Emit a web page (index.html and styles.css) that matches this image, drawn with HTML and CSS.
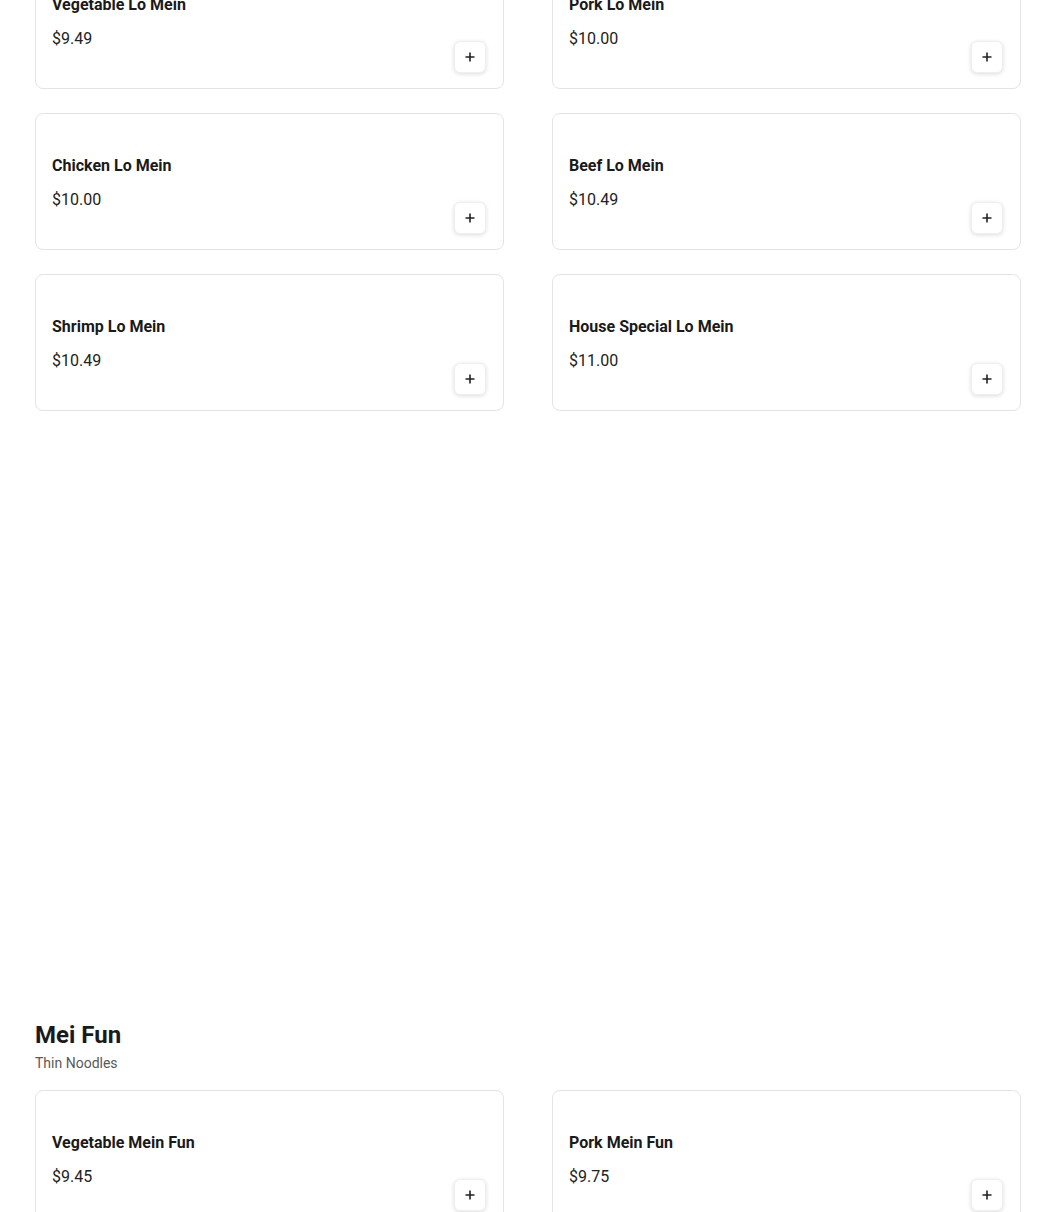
FILE: index.html
```html
<!DOCTYPE html>
<html>
<head>
<meta charset="utf-8">
<link rel="stylesheet" href="styles.css">
</head>
<body>
<main class="menu">
  <section class="category first">
    <div class="grid">
      <div class="card"><div class="info"><div class="name">Vegetable Lo Mein</div><div class="price">$9.49</div></div><button class="add"><svg viewBox="0 0 12 12" width="12" height="12"><path d="M6 1.5v9M1.5 6h9" stroke="#222" stroke-width="1.6" fill="none"/></svg></button></div>
      <div class="card"><div class="info"><div class="name">Pork Lo Mein</div><div class="price">$10.00</div></div><button class="add"><svg viewBox="0 0 12 12" width="12" height="12"><path d="M6 1.5v9M1.5 6h9" stroke="#222" stroke-width="1.6" fill="none"/></svg></button></div>
      <div class="card"><div class="info"><div class="name">Chicken Lo Mein</div><div class="price">$10.00</div></div><button class="add"><svg viewBox="0 0 12 12" width="12" height="12"><path d="M6 1.5v9M1.5 6h9" stroke="#222" stroke-width="1.6" fill="none"/></svg></button></div>
      <div class="card"><div class="info"><div class="name">Beef Lo Mein</div><div class="price">$10.49</div></div><button class="add"><svg viewBox="0 0 12 12" width="12" height="12"><path d="M6 1.5v9M1.5 6h9" stroke="#222" stroke-width="1.6" fill="none"/></svg></button></div>
      <div class="card"><div class="info"><div class="name">Shrimp Lo Mein</div><div class="price">$10.49</div></div><button class="add"><svg viewBox="0 0 12 12" width="12" height="12"><path d="M6 1.5v9M1.5 6h9" stroke="#222" stroke-width="1.6" fill="none"/></svg></button></div>
      <div class="card"><div class="info"><div class="name">House Special Lo Mein</div><div class="price">$11.00</div></div><button class="add"><svg viewBox="0 0 12 12" width="12" height="12"><path d="M6 1.5v9M1.5 6h9" stroke="#222" stroke-width="1.6" fill="none"/></svg></button></div>
    </div>
  </section>
  <section class="category">
    <h2 class="title">Mei Fun</h2>
    <p class="subtitle">Thin Noodles</p>
    <div class="grid">
      <div class="card"><div class="info"><div class="name">Vegetable Mein Fun</div><div class="price">$9.45</div></div><button class="add"><svg viewBox="0 0 12 12" width="12" height="12"><path d="M6 1.5v9M1.5 6h9" stroke="#222" stroke-width="1.6" fill="none"/></svg></button></div>
      <div class="card"><div class="info"><div class="name">Pork Mein Fun</div><div class="price">$9.75</div></div><button class="add"><svg viewBox="0 0 12 12" width="12" height="12"><path d="M6 1.5v9M1.5 6h9" stroke="#222" stroke-width="1.6" fill="none"/></svg></button></div>
    </div>
  </section>
</main>
</body>
</html>
```
FILE: styles.css
```css
html, body {
  margin: 0;
  padding: 0;
  background: #fff;
  font-family: Roboto, "Liberation Sans", sans-serif;
  color: #1f1f1f;
}
.menu {
  width: 986px;
  margin: 0 0 0 35px;
  overflow: hidden;
  height: 1212px;
}
.category.first {
  margin-top: -48px;
  margin-bottom: 608px;
}
.grid {
  display: grid;
  grid-template-columns: 1fr 1fr;
  column-gap: 48px;
  row-gap: 24px;
}
.card {
  box-sizing: border-box;
  height: 137px;
  border: 1px solid #e4e4e4;
  border-radius: 8px;
  padding: 16px 17px 15px 16px;
  display: flex;
  justify-content: space-between;
  align-items: flex-end;
  background: #fff;
}
.info {
  align-self: flex-start;
  margin-top: 24px;
}
.name {
  font-size: 16px;
  font-weight: 700;
  line-height: 24px;
  color: #1a1a1a;
}
.price {
  font-size: 16px;
  line-height: 24px;
  margin-top: 10px;
  color: #222;
}
.add {
  width: 32px;
  height: 32px;
  padding: 0;
  border: 1px solid #efefef;
  border-radius: 6px;
  background: #fff;
  box-shadow: 0 1px 4px rgba(0,0,0,0.14);
  display: flex;
  align-items: center;
  justify-content: center;
}
.title {
  margin: 0;
  font-size: 24px;
  line-height: 32px;
  font-weight: 700;
  color: #1a1a1a;
}
.subtitle {
  margin: 2px 0 17px;
  font-size: 14px;
  line-height: 20px;
  color: #595959;
}
```
